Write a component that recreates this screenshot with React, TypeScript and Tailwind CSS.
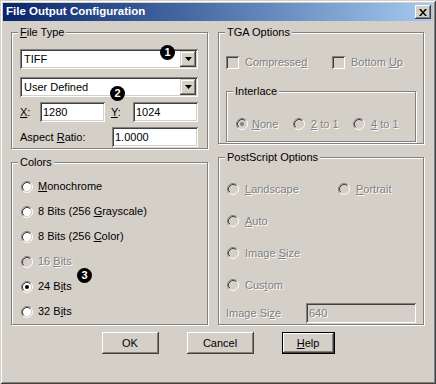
const sunken =
  "shadow-[inset_1px_1px_0_#808080,inset_-1px_-1px_0_#fff,inset_2px_2px_0_#404040,inset_-2px_-2px_0_#d4d0c8]";
const raised =
  "shadow-[inset_-1px_-1px_0_#404040,inset_1px_1px_0_#fff,inset_-2px_-2px_0_#808080,inset_2px_2px_0_#d4d0c8]";
const etched =
  "border border-[#808080] shadow-[inset_1px_1px_0_#fff,1px_1px_0_#fff]";
const dim = "text-[#808080] [text-shadow:1px_1px_0_#fff]";

const Radio = ({ checked = false, disabled = false }) => (
  <svg width="12" height="12" viewBox="0 0 12 12" className="shrink-0">
    <circle cx="6" cy="6" r="4.2" fill={disabled ? "#d4d0c8" : "#fff"} />
    <path d="M2.11 9.89A5.5 5.5 0 0 1 9.89 2.11" fill="none" stroke="#808080" />
    <path d="M9.89 2.11A5.5 5.5 0 0 1 2.11 9.89" fill="none" stroke="#fff" />
    <path d="M2.82 9.18A4.5 4.5 0 0 1 9.18 2.82" fill="none" stroke="#404040" />
    <path d="M9.18 2.82A4.5 4.5 0 0 1 2.82 9.18" fill="none" stroke="#d4d0c8" />
    {checked && <circle cx="6" cy="6" r="2" fill={disabled ? "#808080" : "#000"} />}
  </svg>
);

const Check = () => (
  <div className={`w-[13px] h-[13px] shrink-0 bg-[#d4d0c8] ${sunken}`} />
);

const Group = ({ label, className, children }: { label: React.ReactNode; className: string; children?: React.ReactNode }) => (
  <div className={`relative ${etched} ${className}`}>
    <span className="absolute left-[6px] -top-[7px] px-[2px] bg-[#d4d0c8] leading-[13px]">{label}</span>
    {children}
  </div>
);

const Combo = ({ value }: { value: string }) => (
  <div className={`h-[20px] w-[178px] bg-white flex items-center p-[2px] ${sunken}`}>
    <span className="flex-1 pl-[2px] leading-[13px]">{value}</span>
    <div className="w-[16px] h-[16px] flex items-center justify-center shadow-[inset_-1px_-1px_0_#404040,inset_1px_1px_0_#d4d0c8,inset_-2px_-2px_0_#808080,inset_2px_2px_0_#fff] bg-[#d4d0c8]">
      <svg width="7" height="4" viewBox="0 0 7 4"><path d="M0 0h7L3.5 4z" fill="#000" /></svg>
    </div>
  </div>
);

const Field = ({ value, w, off = false }: { value: string; w: string; off?: boolean }) => (
  <div className={`h-[20px] ${w} flex items-center pl-[3px] leading-[13px] ${off ? `bg-[#d4d0c8] ${dim}` : "bg-white"} ${sunken}`}>
    {value}
  </div>
);

const Badge = ({ n, className }: { n: string; className: string }) => (
  <div className={`absolute w-[15px] h-[15px] rounded-full bg-black text-white font-bold text-[11px] leading-none flex items-center justify-center ${className}`}>
    {n}
  </div>
);

const Btn = ({ children, w, def = false }: { children: React.ReactNode; w: string; def?: boolean }) => (
  <div className={`${w} h-[22px] flex items-center justify-center ${def ? "border border-black" : ""} ${raised}`}>
    {children}
  </div>
);

export default function App() {
  return (
    <div className="relative w-[436px] h-[384px] bg-[#d4d0c8] p-[3px] font-['Liberation_Sans',Arial,sans-serif] text-[11px] text-black shadow-[inset_1px_1px_0_#d4d0c8,inset_-1px_-1px_0_#404040,inset_2px_2px_0_#fff,inset_-2px_-2px_0_#808080]">
      <div className="h-[18px] flex items-center pl-[3px] pr-[2px] bg-gradient-to-r from-[#0a246a] to-[#a6caf0]">
        <span className="flex-1 text-white font-bold text-[11.5px]">File Output Configuration</span>
        <div className={`w-[16px] h-[14px] bg-[#d4d0c8] flex items-center justify-center ${raised}`}>
          <svg width="8" height="7" viewBox="0 0 8 7">
            <path d="M0 0h2l2 2.5L6 0h2L5 3.5 8 7H6L4 4.5 2 7H0l3-3.5z" fill="#000" />
          </svg>
        </div>
      </div>

      <div className="pt-[11px] pl-[8px]">
        <div className="flex gap-[10px]">
          <div className="flex flex-col gap-[13px] w-[197px]">
            <Group label={<><u>F</u>ile Type</>} className="h-[117px] pl-[8px] pt-[16px]">
              <div className="flex flex-col">
                <Combo value="TIFF" />
                <div className="mt-[8px]"><Combo value="User Defined" /></div>
                <div className="mt-[5px] flex items-center">
                  <span className="w-[20px]"><u>X</u>:</span>
                  <Field value="1280" w="w-[65px]" />
                  <span className="ml-[6px] w-[22px]"><u>Y</u>:</span>
                  <Field value="1024" w="w-[65px]" />
                </div>
                <div className="mt-[5px] flex items-center">
                  <span className="w-[92px]">Aspect <u>R</u>atio:</span>
                  <Field value="1.0000" w="w-[86px]" />
                </div>
              </div>
            </Group>

            <Group label="Colors" className="h-[163px] pl-[9px] pt-[11px]">
              {[
                [<><u>M</u>onochrome</>, false, false],
                [<>8 Bits (256 <u>G</u>rayscale)</>, false, false],
                [<>8 Bits (256 <u>C</u>olor)</>, false, false],
                [<>16 <u>B</u>its</>, false, true],
                [<>24 B<u>i</u>ts</>, true, false],
                [<>32 B<u>i</u>ts</>, false, false],
              ].map(([t, c, d], i) => (
                <div key={i} className="h-[25px] flex items-center gap-[5px]">
                  <Radio checked={c as boolean} disabled={d as boolean} />
                  <span className={d ? dim : ""}>{t as React.ReactNode}</span>
                </div>
              ))}
            </Group>
          </div>

          <div className="flex flex-col gap-[13px] w-[206px]">
            <Group label="TGA Options" className="h-[112px] pl-[7px] pt-[21px]">
              <div className="flex items-center">
                <div className="w-[106px] flex items-center gap-[6px]">
                  <Check />
                  <span className={dim}>Compresse<u>d</u></span>
                </div>
                <div className="flex items-center gap-[6px]">
                  <Check />
                  <span className={dim}>Bottom <u>U</u>p</span>
                </div>
              </div>
              <div className={`relative mt-[20px] w-[190px] h-[51px] ${etched} pl-[9px] pt-[24px]`}>
                <span className="absolute left-[6px] -top-[7px] px-[2px] bg-[#d4d0c8] leading-[13px]">Interlace</span>
                <div className="flex items-center">
                  <div className="w-[57px] flex items-center gap-[4px]">
                    <Radio checked disabled />
                    <span className={dim}><u>N</u>one</span>
                  </div>
                  <div className="w-[60px] flex items-center gap-[6px]">
                    <Radio disabled />
                    <span className={dim}><u>2</u> to 1</span>
                  </div>
                  <div className="flex items-center gap-[6px]">
                    <Radio disabled />
                    <span className={dim}><u>4</u> to 1</span>
                  </div>
                </div>
              </div>
            </Group>

            <Group label="PostScript Options" className="h-[168px] pl-[7px] pt-[15px]">
              <div className="pl-[1px]">
                <div className="h-[32px] flex items-center">
                  <div className="w-[111px] flex items-center gap-[6px]">
                    <Radio disabled />
                    <span className={dim}><u>L</u>andscape</span>
                  </div>
                  <div className="flex items-center gap-[6px]">
                    <Radio disabled />
                    <span className={dim}><u>P</u>ortrait</span>
                  </div>
                </div>
                {[
                  <><u>A</u>uto</>,
                  <>Image <u>S</u>ize</>,
                  <>Cus<u>t</u>om</>,
                ].map((t, i) => (
                  <div key={i} className="h-[32px] flex items-center gap-[6px]">
                    <Radio disabled />
                    <span className={dim}>{t}</span>
                  </div>
                ))}
              </div>
              <div className="mt-[2px] flex items-center">
                <span className={`w-[80px] ${dim}`}>Image Si<u>z</u>e</span>
                <Field value="640" w="w-[110px]" off />
              </div>
            </Group>
          </div>
        </div>

        <div className="mt-[7px] pr-[8px] flex justify-center gap-[28px]">
          <Btn w="w-[57px]">OK</Btn>
          <Btn w="w-[67px]">Cancel</Btn>
          <Btn w="w-[53px]" def><u>H</u>elp</Btn>
        </div>
      </div>

      <Badge n="1" className="left-[160px] top-[45px]" />
      <Badge n="2" className="left-[110px] top-[86px]" />
      <Badge n="3" className="left-[77px] top-[268px]" />
    </div>
  );
}
